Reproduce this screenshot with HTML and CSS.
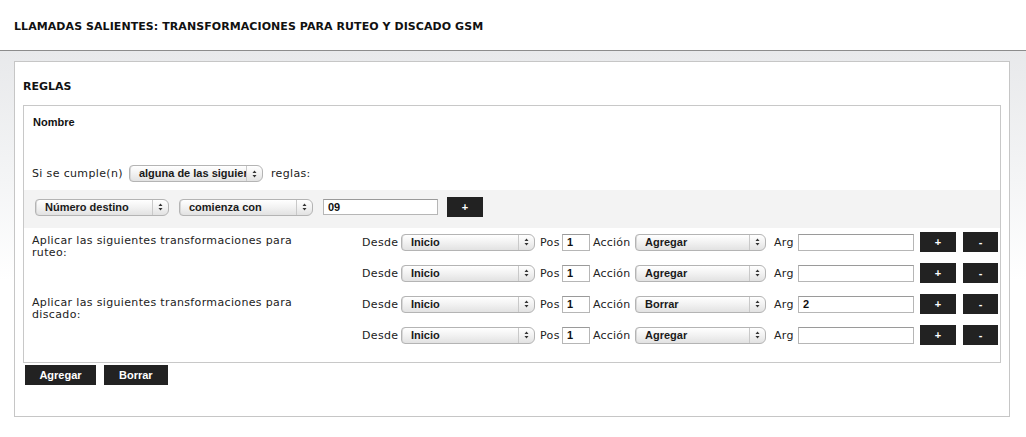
FILE: index.html
```html
<!DOCTYPE html>
<html>
<head>
    <meta charset="utf-8">
    <link rel="stylesheet" href="styles.css">
</head>
<body>
    <div class="header">
        <h1>LLAMADAS SALIENTES: TRANSFORMACIONES PARA RUTEO Y DISCADO GSM</h1>
    </div>

    <div class="page">
        <div class="panel">
            <h2>REGLAS</h2>

            <div class="rule-box">
                <div class="name-row">Nombre</div>

                <!-- Match mode -->
                <div class="match-row">
                    <span>Si se cumple(n)</span>
                    <div class="sel w134 match-sel">
                        <span class="sel-text">alguna de las siguientes</span>
                        <span class="sel-arrow"><svg width="7" height="10" viewBox="0 0 7 10"><path d="M3.5 1.5 L5.5 4 H1.5 Z M3.5 8.5 L5.5 6 H1.5 Z" fill="#333"/></svg></span>
                    </div>
                    <span>reglas:</span>
                </div>

                <!-- Condition -->
                <div class="cond-band">
                    <div class="sel w134">
                        <span class="sel-text">Número destino</span>
                        <span class="sel-arrow"><svg width="7" height="10" viewBox="0 0 7 10"><path d="M3.5 1.5 L5.5 4 H1.5 Z M3.5 8.5 L5.5 6 H1.5 Z" fill="#333"/></svg></span>
                    </div>
                    <div class="sel w134">
                        <span class="sel-text">comienza con</span>
                        <span class="sel-arrow"><svg width="7" height="10" viewBox="0 0 7 10"><path d="M3.5 1.5 L5.5 4 H1.5 Z M3.5 8.5 L5.5 6 H1.5 Z" fill="#333"/></svg></span>
                    </div>
                    <input class="field cond-value" type="text" value="09">
                    <button class="btn small">+</button>
                </div>

                <!-- Ruteo -->
                <div class="trans-group">
                    <div class="trans-label">Aplicar las siguientes transformaciones para ruteo:</div>
                    <div class="trans-rows">
                        <div class="trans-row">
                            <span class="lbl">Desde</span>
                            <div class="sel"><span class="sel-text">Inicio</span><span class="sel-arrow"><svg width="7" height="10" viewBox="0 0 7 10"><path d="M3.5 1.5 L5.5 4 H1.5 Z M3.5 8.5 L5.5 6 H1.5 Z" fill="#333"/></svg></span></div>
                            <span class="lbl pad-s">Pos</span>
                            <input class="field" type="text" value="1">
                            <span class="lbl pad-xs">Acción</span>
                            <div class="sel"><span class="sel-text">Agregar</span><span class="sel-arrow"><svg width="7" height="10" viewBox="0 0 7 10"><path d="M3.5 1.5 L5.5 4 H1.5 Z M3.5 8.5 L5.5 6 H1.5 Z" fill="#333"/></svg></span></div>
                            <span class="lbl pad-m">Arg</span>
                            <input class="field" type="text" value="">
                            <button class="btn small plus">+</button>
                            <button class="btn small minus">-</button>
                        </div>
                        <div class="trans-row">
                            <span class="lbl">Desde</span>
                            <div class="sel"><span class="sel-text">Inicio</span><span class="sel-arrow"><svg width="7" height="10" viewBox="0 0 7 10"><path d="M3.5 1.5 L5.5 4 H1.5 Z M3.5 8.5 L5.5 6 H1.5 Z" fill="#333"/></svg></span></div>
                            <span class="lbl pad-s">Pos</span>
                            <input class="field" type="text" value="1">
                            <span class="lbl pad-xs">Acción</span>
                            <div class="sel"><span class="sel-text">Agregar</span><span class="sel-arrow"><svg width="7" height="10" viewBox="0 0 7 10"><path d="M3.5 1.5 L5.5 4 H1.5 Z M3.5 8.5 L5.5 6 H1.5 Z" fill="#333"/></svg></span></div>
                            <span class="lbl pad-m">Arg</span>
                            <input class="field" type="text" value="">
                            <button class="btn small plus">+</button>
                            <button class="btn small minus">-</button>
                        </div>
                    </div>
                </div>

                <!-- Discado -->
                <div class="trans-group">
                    <div class="trans-label">Aplicar las siguientes transformaciones para discado:</div>
                    <div class="trans-rows">
                        <div class="trans-row">
                            <span class="lbl">Desde</span>
                            <div class="sel"><span class="sel-text">Inicio</span><span class="sel-arrow"><svg width="7" height="10" viewBox="0 0 7 10"><path d="M3.5 1.5 L5.5 4 H1.5 Z M3.5 8.5 L5.5 6 H1.5 Z" fill="#333"/></svg></span></div>
                            <span class="lbl pad-s">Pos</span>
                            <input class="field" type="text" value="1">
                            <span class="lbl pad-xs">Acción</span>
                            <div class="sel"><span class="sel-text">Borrar</span><span class="sel-arrow"><svg width="7" height="10" viewBox="0 0 7 10"><path d="M3.5 1.5 L5.5 4 H1.5 Z M3.5 8.5 L5.5 6 H1.5 Z" fill="#333"/></svg></span></div>
                            <span class="lbl pad-m">Arg</span>
                            <input class="field" type="text" value="2">
                            <button class="btn small plus">+</button>
                            <button class="btn small minus">-</button>
                        </div>
                        <div class="trans-row">
                            <span class="lbl">Desde</span>
                            <div class="sel"><span class="sel-text">Inicio</span><span class="sel-arrow"><svg width="7" height="10" viewBox="0 0 7 10"><path d="M3.5 1.5 L5.5 4 H1.5 Z M3.5 8.5 L5.5 6 H1.5 Z" fill="#333"/></svg></span></div>
                            <span class="lbl pad-s">Pos</span>
                            <input class="field" type="text" value="1">
                            <span class="lbl pad-xs">Acción</span>
                            <div class="sel"><span class="sel-text">Agregar</span><span class="sel-arrow"><svg width="7" height="10" viewBox="0 0 7 10"><path d="M3.5 1.5 L5.5 4 H1.5 Z M3.5 8.5 L5.5 6 H1.5 Z" fill="#333"/></svg></span></div>
                            <span class="lbl pad-m">Arg</span>
                            <input class="field" type="text" value="">
                            <button class="btn small plus">+</button>
                            <button class="btn small minus">-</button>
                        </div>
                    </div>
                </div>
            </div>

            <div class="actions">
                <button class="btn wide">Agregar</button>
                <button class="btn">Borrar</button>
            </div>
        </div>
    </div>
</body>
</html>
```

FILE: styles.css
```css
body {
    margin: 0;
    background: #fff;
    font-family: "DejaVu Sans", Verdana, sans-serif;
    font-size: 11px;
    letter-spacing: 0.35px;
    color: #222;
}

.header {
    height: 51px;
    box-sizing: border-box;
    border-bottom: 1px solid #8c8c8c;
}
.header h1 {
    margin: 0;
    padding: 20px 0 0 14px;
    font-size: 11px;
    line-height: 14px;
    font-weight: bold;
    letter-spacing: 0.07px;
    color: #111;
}

.page {
    padding: 10px 16px 20px 14px;
    background: linear-gradient(#e8e9eb 0, #f4f5f6 130px, #fff 230px);
}

.panel {
    background: #fff;
    border: 1px solid #c6c6c6;
    padding: 0 8px 31px 8px;
}
.panel h2 {
    margin: 0 0 11px 0;
    padding-top: 18px;
    font-size: 11px;
    line-height: 14px;
    font-weight: bold;
    letter-spacing: 0;
    color: #111;
}

/* Rule box */
.rule-box {
    border: 1px solid #c8c8c8;
    padding-bottom: 17px;
}
.name-row {
    padding: 10px 0 0 9px;
    line-height: 12px;
    font-family: "Liberation Sans", Arial, sans-serif;
    font-weight: bold;
    letter-spacing: 0;
    color: #111;
}
.match-row {
    display: flex;
    align-items: center;
    gap: 8px;
    height: 17px;
    margin: 37px 0 8px 0;
    padding-left: 8px;
}
.match-sel {
    margin-left: -2px;
}

/* Fake mac select */
.sel {
    display: flex;
    align-items: stretch;
    height: 17px;
    box-sizing: border-box;
    border: 1px solid #b4b4b4;
    border-radius: 4px 6px 6px 4px;
    background: linear-gradient(#ffffff, #f3f3f3 45%, #e2e2e2);
    box-shadow: inset 1px 0 0 #d8d8d8;
    overflow: hidden;
}
.sel.w134 { width: 134px; }
.sel-text {
    flex: 1;
    padding-left: 9px;
    overflow: hidden;
    white-space: nowrap;
    font-family: "Liberation Sans", Arial, sans-serif;
    font-weight: bold;
    font-size: 11px;
    letter-spacing: 0;
    line-height: 15px;
    color: #1a1a1a;
}
.sel-arrow {
    width: 15px;
    border-left: 1px solid #c9c9c9;
    display: flex;
    align-items: center;
    justify-content: center;
}

.field {
    box-sizing: border-box;
    height: 16px;
    border: 1px solid #b6b6b6;
    border-top-color: #9a9a9a;
    padding: 0 4px;
    margin: 0;
    font-family: "Liberation Sans", Arial, sans-serif;
    font-weight: bold;
    font-size: 11px;
    letter-spacing: 0;
    color: #111;
    background: #fff;
    width: 100%;
}

.btn {
    height: 20px;
    border: none;
    margin: 0;
    padding: 0 15px;
    background: #222;
    color: #fff;
    font-family: "Liberation Sans", Arial, sans-serif;
    font-weight: bold;
    font-size: 11px;
    letter-spacing: 0;
}
.btn.small {
    width: 36px;
    padding: 0;
}
.btn.wide { width: 71px; padding: 0; }

/* Condition band */
.cond-band {
    display: flex;
    align-items: center;
    gap: 10px;
    height: 38px;
    box-sizing: border-box;
    padding: 7px 11px 11px 11px;
    background: #f3f3f3;
}
.cond-value {
    width: 115px;
    margin-right: -1px;
}

/* Transformations */
.trans-group {
    display: flex;
    padding-left: 8px;
    margin-top: 11px;
}
.cond-band + .trans-group {
    margin-top: 4px;
}
.trans-label {
    width: 280px;
    margin-right: 50px;
    padding-top: 3px;
    line-height: 12px;
}
.trans-rows {
    display: flex;
    flex-direction: column;
    gap: 11px;
}
.trans-row {
    display: grid;
    grid-template-columns: 39px 134px 27px 28px 45px 131px 32px 116px 42px 42px;
    align-items: center;
    height: 20px;
}
.lbl {
    white-space: nowrap;
}
.pad-s { padding-left: 5px; }
.pad-xs { padding-left: 3px; letter-spacing: 0.2px; }
.pad-m { padding-left: 8px; }
.trans-row .field {
    height: 17px;
}
.btn.plus { justify-self: end; }
.btn.minus { justify-self: end; width: 35px; }

.actions {
    display: flex;
    gap: 8px;
    margin-top: 2px;
    padding-left: 2px;
}
```
